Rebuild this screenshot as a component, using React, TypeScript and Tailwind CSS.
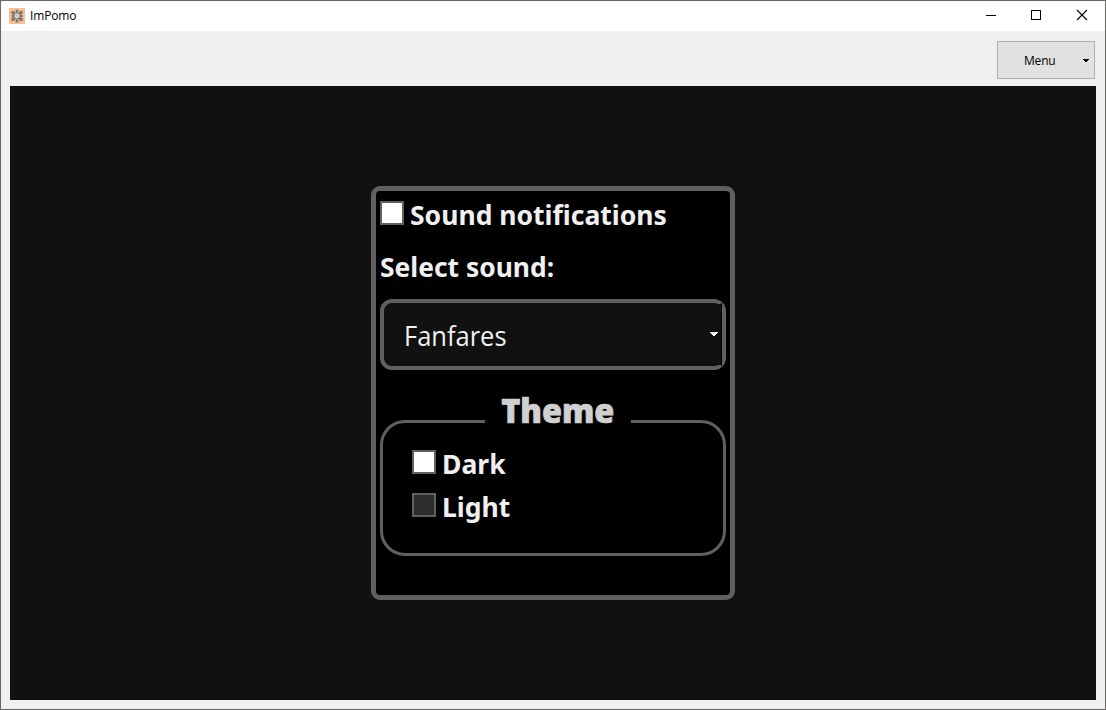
import React from "react";

function AppIcon() {
  return (
    <svg width="16" height="16" viewBox="0 0 16 16" className="shrink-0">
      <rect width="16" height="16" fill="#fcbc96" />
      <g fill="#80736c">
        <circle cx="8" cy="8" r="3.6" />
        <circle cx="8" cy="3" r="1.5" />
        <circle cx="8" cy="13" r="1.5" />
        <circle cx="4" cy="4.6" r="1.8" />
        <circle cx="12" cy="4.6" r="1.8" />
        <circle cx="3.6" cy="8" r="1.3" />
        <circle cx="12.4" cy="8" r="1.3" />
        <circle cx="4" cy="11.4" r="1.8" />
        <circle cx="12" cy="11.4" r="1.8" />
      </g>
      <circle cx="8" cy="8" r="2.4" fill="#e4e2e0" />
      <path d="M8 6.5V8l1 1" stroke="#8a8a8a" strokeWidth="0.7" fill="none" />
      <g fill="#3f8f9b">
        <rect x="7" y="2.4" width="2" height="1.2" />
        <rect x="7" y="12.4" width="2" height="1.2" />
        <rect x="3" y="4.5" width="1.2" height="1.2" />
        <rect x="11.8" y="4.5" width="1.2" height="1.2" />
        <rect x="3" y="10.5" width="1.2" height="1.2" />
        <rect x="11.8" y="10.5" width="1.2" height="1.2" />
      </g>
    </svg>
  );
}

function TitleBar() {
  return (
    <header className="flex h-[30px] shrink-0 items-center bg-white pl-2">
      <AppIcon />
      <span className="ml-[5px] text-[12px] leading-4 tracking-[-0.15px] text-black">ImPomo</span>
      <svg className="ml-auto" width="138" height="30" viewBox="0 0 138 30" fill="none" stroke="#000" shapeRendering="crispEdges">
        <path d="M19 14.5h10" />
        <rect x="64.5" y="9.5" width="9" height="9" />
        <path d="M110 9l10 10M120 9l-10 10" shapeRendering="auto" strokeWidth="1.1" />
      </svg>
    </header>
  );
}

function Box({ on }: { on: boolean }) {
  return (
    <span
      className={
        on
          ? "size-6 shrink-0 border-2 border-[#606060] bg-white"
          : "size-6 shrink-0 border-2 border-[#606060] bg-[#2d2d2d]"
      }
    />
  );
}

function Check({ label, on }: { label: string; on: boolean }) {
  return (
    <label className="flex h-6 items-start gap-[6px]">
      <Box on={on} />
      <span className="origin-left scale-x-[0.982] pt-0.5 font-['Noto_Sans',sans-serif] text-[27px] leading-6 font-bold whitespace-nowrap">{label}</span>
    </label>
  );
}

export default function App() {
  return (
    <div className="flex h-[710px] w-[1106px] flex-col overflow-hidden border border-[#6b6662] bg-[#f0f0f0] font-['Open_Sans','Noto_Sans',sans-serif]">
      <TitleBar />
      <div className="flex h-[55px] shrink-0 justify-end pt-2.5 pr-2.5">
        <button className="flex h-[38px] w-[98px] items-center border border-[#adadad] bg-[#e1e1e1] text-[12px] text-black">
          <span className="ml-[26px] pt-0.5 tracking-[-0.2px]">Menu</span>
          <svg className="mt-px mr-[5px] ml-auto" width="6" height="3" viewBox="0 0 6 3" shapeRendering="crispEdges">
            <path d="M0 0h6v1H5v1H4v1H2V2H1V1H0z" />
          </svg>
        </button>
      </div>
      <main className="mx-[9px] flex h-[614px] shrink-0 justify-center bg-[#111111] pt-[100px]">
        <section className="flex h-[414px] w-[364px] flex-col rounded-[9px] border-[5px] border-[#606060] bg-black px-1 pt-2.5 text-[#f0f0f0]">
          <Check label="Sound notifications" on />
          <div className="mt-7 h-7 origin-left scale-x-[0.978] font-['Noto_Sans',sans-serif] text-[27px] leading-7 font-bold">Select sound:</div>
          <div className="mt-[18px] flex h-[71px] shrink-0 items-center rounded-[12px] border-4 border-[#606060] bg-[#111111] pl-5">
            <span className="origin-left scale-x-[0.91] pt-px text-[28px] leading-8">Fanfares</span>
            <span className="ml-auto flex h-[61px] w-[15px] items-center justify-center border border-[#0e0e0e] pb-0.5">
              <svg width="8" height="4" viewBox="0 0 8 4" shapeRendering="crispEdges">
                <path d="M0 0h8v1H7v1H6v1H5v1H3V3H2V2H1V1H0z" fill="#fff" />
              </svg>
            </span>
            <span className="h-[63px] w-px bg-black" />
          </div>
          <fieldset className="relative mt-[50px] flex h-[136px] shrink-0 flex-col gap-[19px] rounded-[25px] border-[3px] border-[#606060] pt-[27px] pl-[29px]">
            <div className="absolute -top-[32px] left-[102px] w-[146px] bg-black text-center font-['Open_Sans',sans-serif] text-[33px] leading-10 font-extrabold text-[#d0d0d0] [-webkit-text-stroke:0.7px_#d0d0d0]">
              <span className="inline-block scale-x-[0.98]">Theme</span>
            </div>
            <Check label="Dark" on />
            <Check label="Light" on={false} />
          </fieldset>
        </section>
      </main>
    </div>
  );
}
